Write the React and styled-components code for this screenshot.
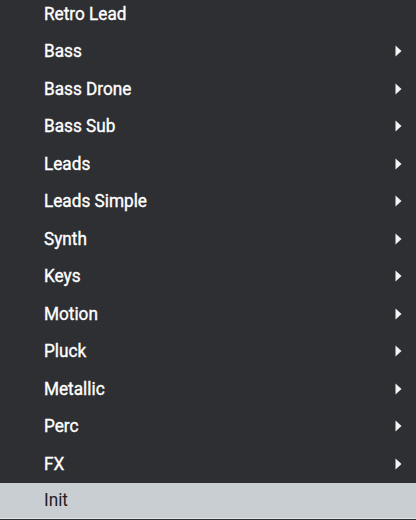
import React from 'react'
import styled, { createGlobalStyle } from 'styled-components'

const Global = createGlobalStyle`
  html, body {
    margin: 0;
    padding: 0;
    background: #2e2f33;
    overflow: hidden;
  }
  body {
    font-family: Roboto, "Liberation Sans", sans-serif;
  }
`

const Menu = styled.ul`
  list-style: none;
  margin: -5px 0 0 0;
  padding: 0;
  width: 416px;
  background: #2e2f33;
`

const Item = styled.li`
  display: flex;
  align-items: center;
  justify-content: space-between;
  height: ${p => (p.$active ? '35px' : '37.5px')};
  padding: 0 14px 0 44px;
  font-size: 17.2px;
  font-weight: 400;
  color: ${p => (p.$active ? '#1f2023' : '#ffffff')};
  background: ${p => (p.$active ? '#c9ced2' : 'transparent')};
  border-bottom: ${p => (p.$active ? '1px solid #e2e5e7' : 'none')};
  -webkit-text-stroke: ${p => (p.$active ? '0' : '0.35px #ffffff')};
`

const Label = styled.span`
  line-height: 37.5px;
  padding-top: ${p => (p.$active ? '2px' : '1px')};
  transform: scaleY(1.04);
`

const Arrow = () => (
  <svg width="7" height="12" viewBox="0 0 7 12">
    <path d="M0.5 0.5 L6.5 6 L0.5 11.5 Z" fill="#f4f4f4" />
  </svg>
)

const items = [
  { name: 'Retro Lead' },
  { name: 'Bass', sub: true },
  { name: 'Bass Drone', sub: true },
  { name: 'Bass Sub', sub: true },
  { name: 'Leads', sub: true },
  { name: 'Leads Simple', sub: true },
  { name: 'Synth', sub: true },
  { name: 'Keys', sub: true },
  { name: 'Motion', sub: true },
  { name: 'Pluck', sub: true },
  { name: 'Metallic', sub: true },
  { name: 'Perc', sub: true },
  { name: 'FX', sub: true },
  { name: 'Init', active: true },
]

const App = () => {
  return (
    <>
      <Global />
      <Menu>
        {items.map(it => (
          <Item key={it.name} $active={it.active}>
            <Label $active={it.active}>{it.name}</Label>
            {it.sub && <Arrow />}
          </Item>
        ))}
      </Menu>
    </>
  )
}

export default App
